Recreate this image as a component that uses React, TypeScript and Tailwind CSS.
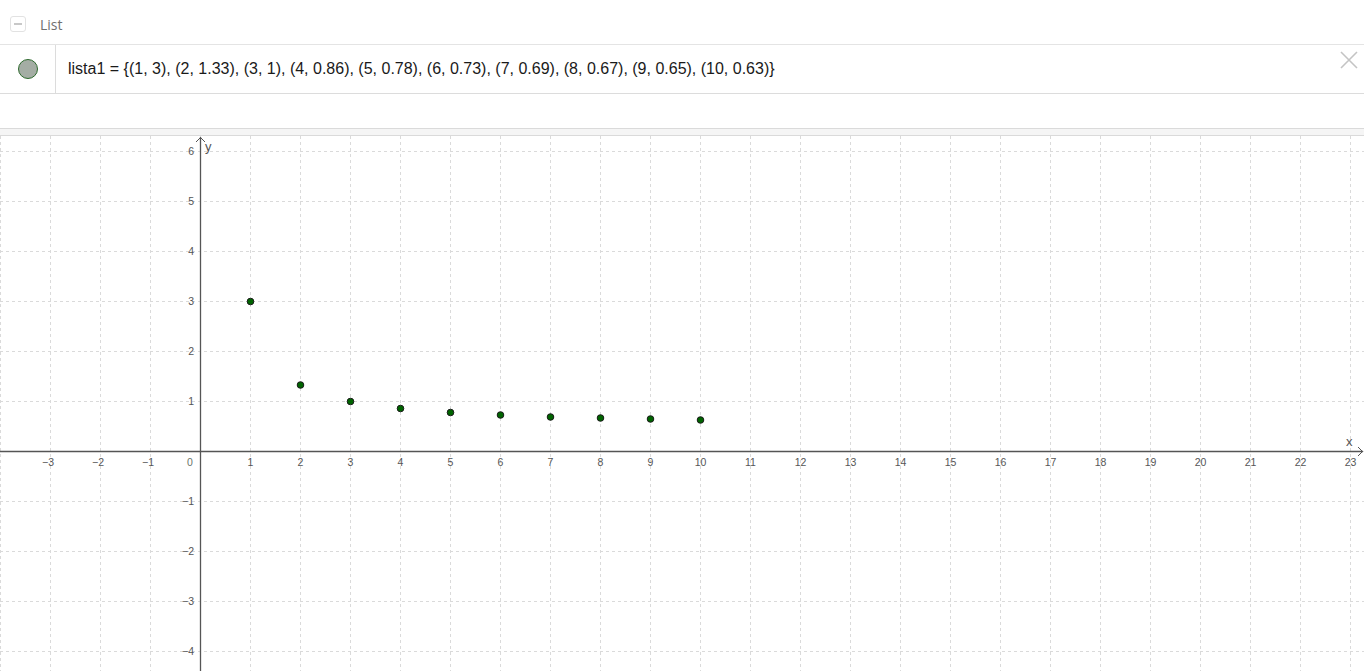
import React from "react";

const W = 1364;
const H = 535;
const OX = 200;
const OY = 315;
const S = 50;

const pts: [number, number][] = [
  [1, 3], [2, 1.33], [3, 1], [4, 0.86], [5, 0.78], [6, 0.73], [7, 0.69], [8, 0.67], [9, 0.65], [10, 0.63],
];

function Graph() {
  const vx: number[] = [];
  for (let k = -4; k <= 23; k++) vx.push(k);
  const hy: number[] = [];
  for (let k = -4; k <= 6; k++) hy.push(k);
  const lab = (n: number) => (n < 0 ? "\u2212" + Math.abs(n) : String(n));
  return (
    <svg width={W} height={H} className="block" style={{ fontFamily: "'Liberation Sans', Arial, sans-serif" }}>
      {vx.map((k) => (
        <line key={"v" + k} x1={OX + k * S + 0.5} x2={OX + k * S + 0.5} y1={0} y2={H} stroke="#dadada" strokeWidth={1} strokeDasharray="3 3" />
      ))}
      {hy.map((k) => (
        <line key={"h" + k} x1={0} x2={W} y1={OY - k * S + 0.5} y2={OY - k * S + 0.5} stroke="#dadada" strokeWidth={1} strokeDasharray="3 3" />
      ))}
      <line x1={OX + 0.5} x2={OX + 0.5} y1={1} y2={H} stroke="#555" strokeWidth={1.3} />
      <line x1={0} x2={W - 1} y1={OY + 0.5} y2={OY + 0.5} stroke="#555" strokeWidth={1.3} />
      <polyline points={`${OX - 4},${6} ${OX + 0.5},${1.5} ${OX + 5},${6}`} fill="none" stroke="#555" strokeWidth={1} />
      <polyline points={`${W - 6},${OY - 4} ${W - 1.5},${OY + 0.5} ${W - 6},${OY + 5}`} fill="none" stroke="#555" strokeWidth={1} />
      <text x={OX + 5} y={15} fontSize={13} fill="#555">y</text>
      <text x={1346} y={OY - 5} fontSize={13} fill="#555">x</text>
      {vx.filter((k) => k >= -3 && k !== 0).map((k) => (
        <text key={"xl" + k} x={OX + k * S + (k < 0 ? -2 : 0.5)} y={OY + 15} fontSize={10.5} fill="#555" textAnchor="middle">{lab(k)}</text>
      ))}
      <text x={OX - 10} y={OY + 15} fontSize={10.5} fill="#6b756b" textAnchor="middle">0</text>
      {hy.filter((k) => k !== 0).map((k) => (
        <text key={"yl" + k} x={OX - 6} y={OY - k * S + 4} fontSize={10.5} fill="#555" textAnchor="end">{lab(k)}</text>
      ))}
      {pts.map(([x, y]) => (
        <circle key={"p" + x} cx={OX + x * S + 0.5} cy={OY - y * S + 0.5} r={3.3} fill="#006400" stroke="#1a1a1a" strokeWidth={1} />
      ))}
    </svg>
  );
}

export default function App() {
  return (
    <div className="w-[1366px] h-[671px] overflow-hidden bg-white">
      <div className="w-[1364px]">
        <div className="h-[45px] pt-[4px] flex items-center border-b border-[#e4e4e4]">
          <div className="ml-[10px] w-[16px] h-[16px] rounded-[3px] border border-[#e2e2e2] flex items-center justify-center">
            <div className="w-[8px] h-[1.5px] bg-[#c8c8c8]" />
          </div>
          <span className="ml-[14px] text-[14px] text-[#707070]" style={{ fontFamily: "'Open Sans', sans-serif" }}>List</span>
        </div>
        <div className="h-[49px] flex border-b border-[#dcdcdc]">
          <div className="w-[56px] border-r border-[#dcdcdc] flex items-center justify-center">
            <div className="w-[20px] h-[20px] rounded-full bg-[#a4ada4] border border-[#2e6a2e]" />
          </div>
          <div className="flex-1 flex items-center pl-[12px] text-[16px] text-[#1a1a1a]" style={{ fontFamily: "'Liberation Sans', Arial, sans-serif" }}>
            lista1 = {"{"}(1, 3), (2, 1.33), (3, 1), (4, 0.86), (5, 0.78), (6, 0.73), (7, 0.69), (8, 0.67), (9, 0.65), (10, 0.63){"}"}
          </div>
          <div className="w-[30px] relative">
            <svg width="18" height="18" className="absolute left-[6px] top-[6px]">
              <path d="M1 1 L17 17 M17 1 L1 17" stroke="#c4c4c4" strokeWidth="1.6" />
            </svg>
          </div>
        </div>
        <div className="h-[34px]" />
        <div className="h-[8px] bg-[#f5f5f5] border-t border-b border-[#dadada]" />
        <Graph />
      </div>
    </div>
  );
}
